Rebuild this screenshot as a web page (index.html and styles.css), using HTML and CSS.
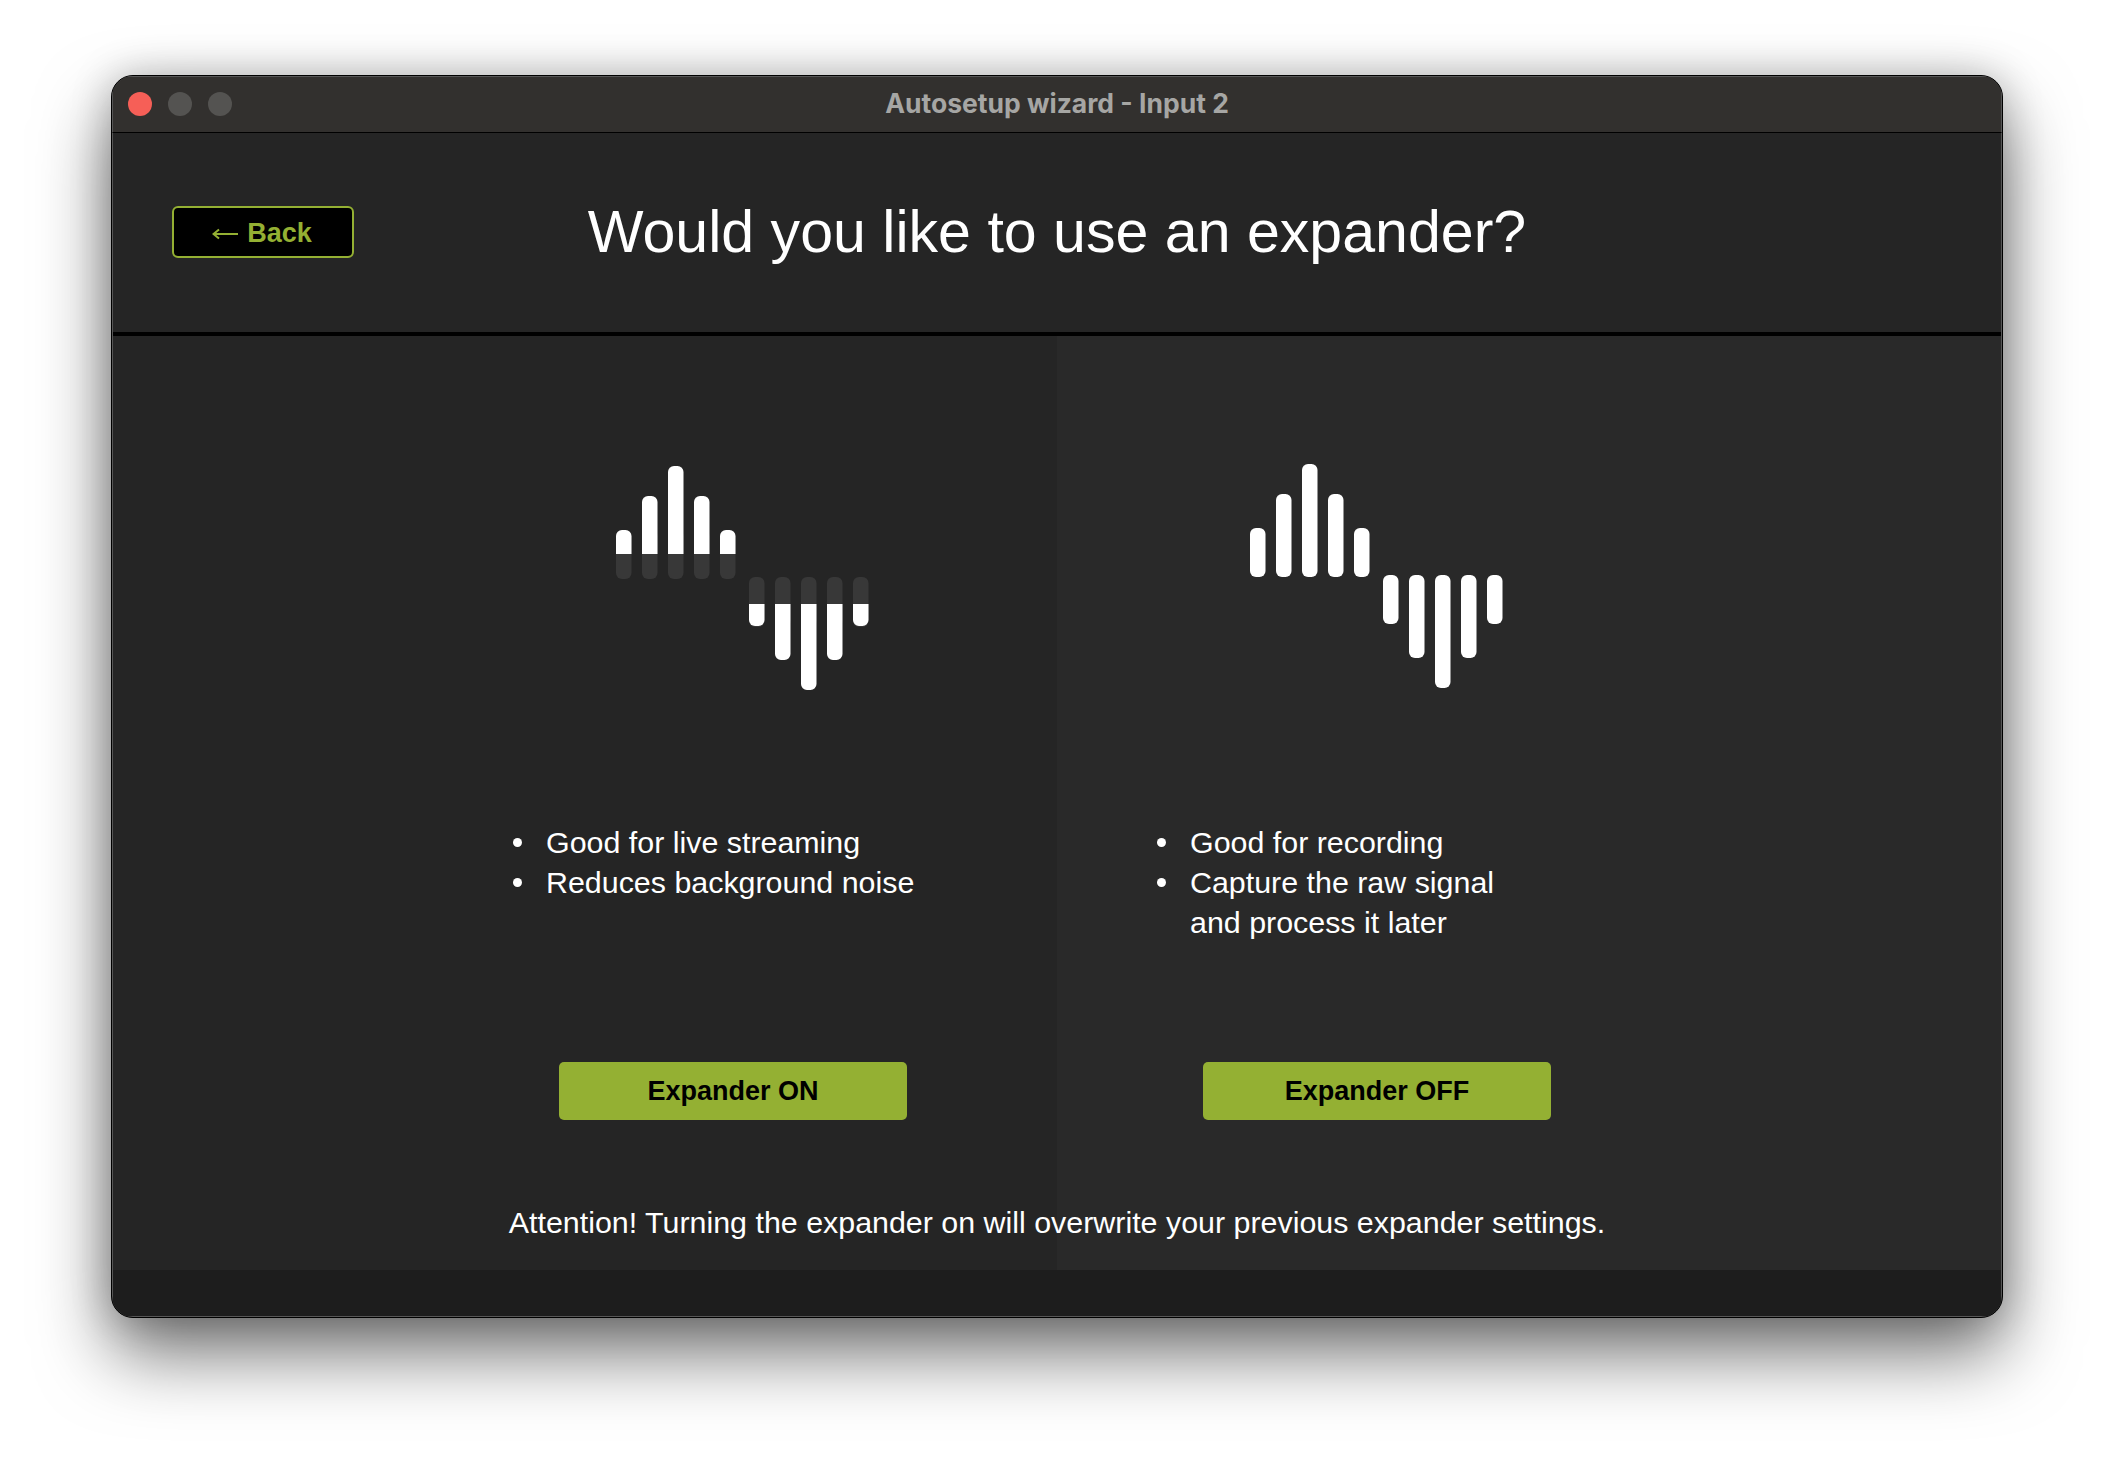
FILE: index.html
```html
<!DOCTYPE html>
<html>
<head>
    <meta charset="UTF-8">
    <title>Autosetup wizard - Input 2</title>
    <link rel="stylesheet" href="styles.css">
</head>
<body>
<div class="window">
    <div class="titlebar">
        <div class="lights">
            <span class="light light-close"></span>
            <span class="light"></span>
            <span class="light"></span>
        </div>
        <div class="window-title">Autosetup wizard - Input 2</div>
    </div>
    <div class="header">
        <button type="button" class="back-button">
            <svg class="back-arrow" width="26" height="12" viewBox="0 0 26 12" fill="none" stroke="#94b033" stroke-width="2">
                <path d="M1 6H26M7 1.5L1.5 6L7 10.5"/>
            </svg>
            <span class="back-label">Back</span>
        </button>
        <h1 class="question">Would you like to use an expander?</h1>
    </div>
    <div class="panes">
        <div class="pane pane-left">
            <svg class="wave wave-on" width="253" height="226" viewBox="0 0 253 226">
                <g fill="#383838">
                    <rect x="0" y="64" width="15.5" height="49" rx="6"/>
                    <rect x="26" y="64" width="15.5" height="49" rx="6"/>
                    <rect x="52" y="64" width="15.5" height="49" rx="6"/>
                    <rect x="78" y="64" width="15.5" height="49" rx="6"/>
                    <rect x="104" y="64" width="15.5" height="49" rx="6"/>
                    <rect x="133" y="111" width="15.5" height="50" rx="6"/>
                    <rect x="159" y="111" width="15.5" height="50" rx="6"/>
                    <rect x="185" y="111" width="15.5" height="50" rx="6"/>
                    <rect x="211" y="111" width="15.5" height="50" rx="6"/>
                    <rect x="237" y="111" width="15.5" height="50" rx="6"/>
                </g>
                <g fill="#fff">
                    <path d="M0 88V70a6 6 0 0 1 6-6h3.5a6 6 0 0 1 6 6v18z"/>
                    <path d="M26 88V36a6 6 0 0 1 6-6h3.5a6 6 0 0 1 6 6v52z"/>
                    <path d="M52 88V6a6 6 0 0 1 6-6h3.5a6 6 0 0 1 6 6v82z"/>
                    <path d="M78 88V36a6 6 0 0 1 6-6h3.5a6 6 0 0 1 6 6v52z"/>
                    <path d="M104 88V70a6 6 0 0 1 6-6h3.5a6 6 0 0 1 6 6v18z"/>
                    <path d="M133 138v16a6 6 0 0 0 6 6h3.5a6 6 0 0 0 6-6v-16z"/>
                    <path d="M159 138v50a6 6 0 0 0 6 6h3.5a6 6 0 0 0 6-6v-50z"/>
                    <path d="M185 138v80a6 6 0 0 0 6 6h3.5a6 6 0 0 0 6-6v-80z"/>
                    <path d="M211 138v50a6 6 0 0 0 6 6h3.5a6 6 0 0 0 6-6v-50z"/>
                    <path d="M237 138v16a6 6 0 0 0 6 6h3.5a6 6 0 0 0 6-6v-16z"/>
                </g>
            </svg>
            <ul class="points">
                <li>Good for live streaming</li>
                <li>Reduces background noise</li>
            </ul>
            <button type="button" class="choice">Expander ON</button>
        </div>
        <div class="pane pane-right">
            <svg class="wave wave-off" width="253" height="226" viewBox="0 0 253 226" fill="#fff">
                <rect x="0" y="64" width="15.5" height="49" rx="6"/>
                <rect x="26" y="30" width="15.5" height="83" rx="6"/>
                <rect x="52" y="0" width="15.5" height="113" rx="6"/>
                <rect x="78" y="30" width="15.5" height="83" rx="6"/>
                <rect x="104" y="64" width="15.5" height="49" rx="6"/>
                <rect x="133" y="111" width="15.5" height="49" rx="6"/>
                <rect x="159" y="111" width="15.5" height="83" rx="6"/>
                <rect x="185" y="111" width="15.5" height="113" rx="6"/>
                <rect x="211" y="111" width="15.5" height="83" rx="6"/>
                <rect x="237" y="111" width="15.5" height="49" rx="6"/>
            </svg>
            <ul class="points">
                <li>Good for recording</li>
                <li>Capture the raw signal<br>and process it later</li>
            </ul>
            <button type="button" class="choice">Expander OFF</button>
        </div>
        <p class="attention">Attention! Turning the expander on will overwrite your previous expander settings.</p>
    </div>
    <div class="footer"></div>
</div>
</body>
</html>
```

FILE: styles.css
```css
* {
    padding: 0;
    margin: 0;
    box-sizing: border-box;
}

body {
    background-color: #fff;
    padding: 75px 0 0 111px;
    height: 1466px;
    overflow: hidden;
    font-family: "Liberation Sans", Arial, sans-serif;
}

.window {
    width: 1892px;
    height: 1243px;
    border: 1px solid #000;
    border-radius: 22px;
    overflow: hidden;
    box-shadow: inset 0 0 0 1px #565656, 0 36px 72px rgba(0, 0, 0, 0.55), 0 0 40px rgba(0, 0, 0, 0.22);
    background-color: #252525;
    display: flex;
    flex-direction: column;
}

.titlebar {
    height: 57px;
    flex: none;
    background-color: #32302e;
    border: 1px solid #565656;
    border-bottom-color: #000;
    position: relative;
    display: flex;
    align-items: center;
    justify-content: center;
}

.lights {
    position: absolute;
    left: 15px;
    top: 15px;
    display: flex;
    gap: 16px;
}

.light {
    width: 24px;
    height: 24px;
    border-radius: 50%;
    background-color: #545351;
}

.light-close {
    background-color: #f65f57;
}

.window-title {
    font-family: Inter, "Liberation Sans", sans-serif;
    font-size: 26.5px;
    font-weight: 700;
    color: #a6a6a4;
    margin-top: -4px;
}

.header {
    height: 203px;
    flex: none;
    border-bottom: 4px solid #000;
    margin: 0 1px;
    position: relative;
    display: flex;
    align-items: center;
    justify-content: center;
}

.back-button {
    position: absolute;
    left: 59px;
    top: 73px;
    width: 182px;
    height: 52px;
    background-color: #000;
    border: 2px solid #94b033;
    border-radius: 6px;
    color: #94b033;
    font-family: inherit;
    font-size: 27px;
    font-weight: bold;
    display: flex;
    align-items: center;
    justify-content: center;
    gap: 9px;
}

.back-arrow {
    display: block;
    margin-top: 4px;
    margin-left: -2px;
}

.back-label {
    margin-top: 2px;
}

.question {
    font-size: 59.1px;
    font-weight: normal;
    color: #fff;
    margin-top: -2px;
}

.panes {
    flex: 1;
    margin: 0 1px;
    display: grid;
    grid-template-columns: 944px 1fr;
    position: relative;
}

.pane {
    display: flex;
    flex-direction: column;
}

.pane-left {
    background-color: #252525;
}

.pane-right {
    background-color: #292929;
}

.wave {
    display: block;
    flex: none;
}

.wave-on {
    margin: 130px 0 0 503px;
}

.wave-off {
    margin: 128px 0 0 193px;
}

.points {
    list-style: none;
    font-size: 30.4px;
    line-height: 40px;
    color: #fff;
    height: 240px;
}

.pane-left .points {
    margin: 130px 0 0 433px;
}

.pane-right .points {
    margin: 132px 0 0 133px;
}

.points li {
    position: relative;
}

.points li::before {
    content: "";
    position: absolute;
    left: -33px;
    top: 16px;
    width: 9px;
    height: 9px;
    border-radius: 50%;
    background-color: #fff;
}

.choice {
    width: 348px;
    height: 58px;
    background-color: #94b033;
    border: none;
    border-radius: 5px;
    color: #000;
    font-family: inherit;
    font-size: 27px;
    font-weight: bold;
}

.pane-left .choice {
    margin-left: 446px;
}

.pane-right .choice {
    margin-left: 146px;
}

.attention {
    position: absolute;
    left: 0;
    right: 0;
    bottom: 28px;
    text-align: center;
    font-size: 30.4px;
    line-height: 40px;
    color: #fff;
}

.footer {
    height: 46px;
    flex: none;
    background-color: #1d1d1d;
    margin: 0 1px 1px;
}
```
